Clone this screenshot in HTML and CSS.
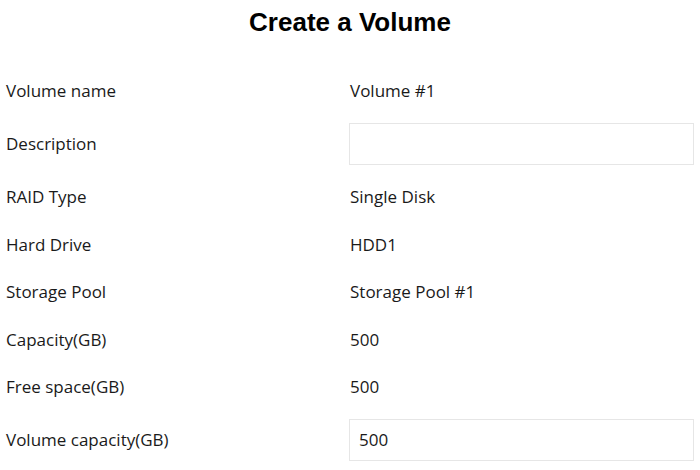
FILE: index.html
```html
<!DOCTYPE html>
<html>
<head>
<meta charset="utf-8">
<link rel="stylesheet" href="styles.css">
</head>
<body>
<div class="page">
  <h1 class="title">Create a Volume</h1>
  <div class="form">
    <div class="row"><div class="label">Volume name</div><div class="value">Volume #1</div></div>
    <div class="row input-row"><div class="label">Description</div><div class="value"><div class="field"></div></div></div>
    <div class="row"><div class="label">RAID Type</div><div class="value">Single Disk</div></div>
    <div class="row"><div class="label">Hard Drive</div><div class="value">HDD1</div></div>
    <div class="row"><div class="label">Storage Pool</div><div class="value">Storage Pool #1</div></div>
    <div class="row"><div class="label">Capacity(GB)</div><div class="value">500</div></div>
    <div class="row"><div class="label">Free space(GB)</div><div class="value">500</div></div>
    <div class="row input-row"><div class="label">Volume capacity(GB)</div><div class="value"><div class="field">500</div></div></div>
  </div>
</div>
</body>
</html>
```
FILE: styles.css
```css
html, body {
  margin: 0;
  padding: 0;
  background: #fff;
}
.page {
  padding: 0 6px;
  font-family: "Open Sans", "Noto Sans", sans-serif;
  color: #1a1a1a;
}
.title {
  margin: 0;
  padding-top: 7px;
  height: 36px;
  line-height: 30px;
  text-align: center;
  font-family: "Liberation Sans", Arial, sans-serif;
  font-weight: bold;
  font-size: 26px;
  color: #000;
}
.form {
  display: flex;
  flex-direction: column;
  gap: 16.5px;
  padding-top: 32px;
}
.row {
  display: grid;
  grid-template-columns: 1fr 1fr;
  align-items: center;
  min-height: 31px;
  font-size: 17px;
}
.value {
  padding-left: 0;
}
.field {
  box-sizing: border-box;
  height: 42px;
  margin-left: -1px;
  border: 1px solid #e6e6e6;
  padding: 0 9px;
  display: flex;
  align-items: center;
}
```
